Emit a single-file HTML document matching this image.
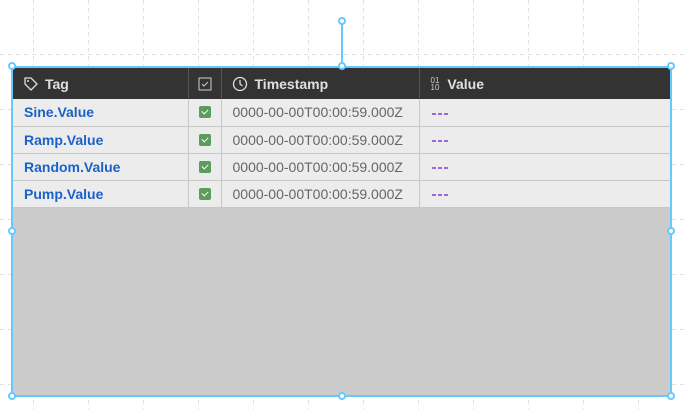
<!DOCTYPE html>
<html><head><style>
*{margin:0;padding:0;box-sizing:border-box}
body{width:685px;height:409px;background:#fff;position:relative;overflow:hidden;font-family:"Liberation Sans",Arial,sans-serif}
.grid{position:absolute;left:0;top:0}
.w{position:absolute;left:11px;top:66px;width:661px;height:331px;border:2px solid #66c8ff;background:#cbcbcb}
table{border-collapse:collapse;width:657px;table-layout:fixed}
th{background:#333;color:#e0e0e0;height:31px;text-align:left;font-size:14px;font-weight:bold;border-right:1px solid #555;padding:0;vertical-align:middle}
td{background:#ececec;height:27px;border-right:1px solid #c8c8c8;border-bottom:1px solid #c8c8c8;font-size:14px;padding:0;vertical-align:middle}
th:last-child,td:last-child{border-right:none}
.tag{color:#1a62c9;font-weight:bold;padding-left:11px}
.ts{color:#666;padding-left:11px}
.v{padding-left:12px}
.v i{display:inline-block;width:4px;height:2px;background:#a066dd;margin-right:2px;vertical-align:middle}
.cb{display:block;margin:0 auto;width:12px;height:12px;background:#5c9c5c;border-radius:2px;position:relative}
.cb:after{content:"";position:absolute;left:3px;top:3px;width:5px;height:3px;border-left:1.5px solid #fff;border-bottom:1.5px solid #fff;transform:rotate(-45deg)}
.h{position:absolute;width:8px;height:8px;border:2px solid #66c8ff;background:#fff;border-radius:50%}
</style></head><body>
<svg class="grid" width="685" height="409">
<g stroke="#e2e2e2" stroke-dasharray="4,4" stroke-width="1">
<line x1="33.5" y1="0" x2="33.5" y2="409"/><line x1="88.5" y1="0" x2="88.5" y2="409"/><line x1="143.5" y1="0" x2="143.5" y2="409"/><line x1="198.5" y1="0" x2="198.5" y2="409"/><line x1="253.5" y1="0" x2="253.5" y2="409"/><line x1="308.5" y1="0" x2="308.5" y2="409"/><line x1="363.5" y1="0" x2="363.5" y2="409"/><line x1="418.5" y1="0" x2="418.5" y2="409"/><line x1="473.5" y1="0" x2="473.5" y2="409"/><line x1="528.5" y1="0" x2="528.5" y2="409"/><line x1="583.5" y1="0" x2="583.5" y2="409"/><line x1="638.5" y1="0" x2="638.5" y2="409"/>
<line x1="0" y1="54.5" x2="685" y2="54.5"/><line x1="0" y1="109.5" x2="685" y2="109.5"/><line x1="0" y1="164.5" x2="685" y2="164.5"/><line x1="0" y1="219.5" x2="685" y2="219.5"/><line x1="0" y1="274.5" x2="685" y2="274.5"/><line x1="0" y1="329.5" x2="685" y2="329.5"/><line x1="0" y1="384.5" x2="685" y2="384.5"/>
</g>
<line x1="342" y1="22" x2="342" y2="66" stroke="#66c8ff" stroke-width="2"/>
</svg>
<div class="w">
<table>
<colgroup><col style="width:175px"><col style="width:33px"><col style="width:198px"><col></colgroup>
<tr>
<th><svg width="16" height="16" viewBox="0 0 16 16" style="vertical-align:-3px;margin:0 6px 0 10px"><path d="M2 2h6l6 6-6 6-6-6z" fill="none" stroke="#ddd" stroke-width="1.3" stroke-linejoin="round"/><circle cx="5" cy="5" r="1" fill="#ddd"/></svg>Tag</th>
<th><svg width="14" height="14" viewBox="0 0 14 14" style="display:block;margin:0 auto"><rect x="1" y="1" width="12" height="12" fill="none" stroke="#ccc"/><path d="M4 7l2 2 4-4" fill="none" stroke="#ccc"/></svg></th>
<th><svg width="16" height="16" viewBox="0 0 16 16" style="vertical-align:-3px;margin:0 7px 0 10px"><circle cx="8" cy="8" r="6.5" fill="none" stroke="#ddd" stroke-width="1.3"/><path d="M8 4v4l2.5 2" fill="none" stroke="#ddd" stroke-width="1.3"/></svg>Timestamp</th>
<th><span style="display:inline-block;font-size:8px;line-height:7px;font-weight:normal;color:#ccc;vertical-align:-1px;margin:0 8px 0 11px">01<br>10</span>Value</th>
</tr>
<tr><td class="tag">Sine.Value</td><td><span class="cb"></span></td><td class="ts">0000-00-00T00:00:59.000Z</td><td class="v"><i></i><i></i><i></i></td></tr>
<tr><td class="tag">Ramp.Value</td><td><span class="cb"></span></td><td class="ts">0000-00-00T00:00:59.000Z</td><td class="v"><i></i><i></i><i></i></td></tr>
<tr><td class="tag">Random.Value</td><td><span class="cb"></span></td><td class="ts">0000-00-00T00:00:59.000Z</td><td class="v"><i></i><i></i><i></i></td></tr>
<tr><td class="tag">Pump.Value</td><td><span class="cb"></span></td><td class="ts">0000-00-00T00:00:59.000Z</td><td class="v"><i></i><i></i><i></i></td></tr>
</table>
</div>
<div class="h" style="left:338px;top:17px"></div>
<div class="h" style="left:8px;top:62px"></div>
<div class="h" style="left:338px;top:62px"></div>
<div class="h" style="left:667px;top:62px"></div>
<div class="h" style="left:8px;top:227px"></div>
<div class="h" style="left:667px;top:227px"></div>
<div class="h" style="left:8px;top:392px"></div>
<div class="h" style="left:338px;top:392px"></div>
<div class="h" style="left:667px;top:392px"></div>
</body></html>
